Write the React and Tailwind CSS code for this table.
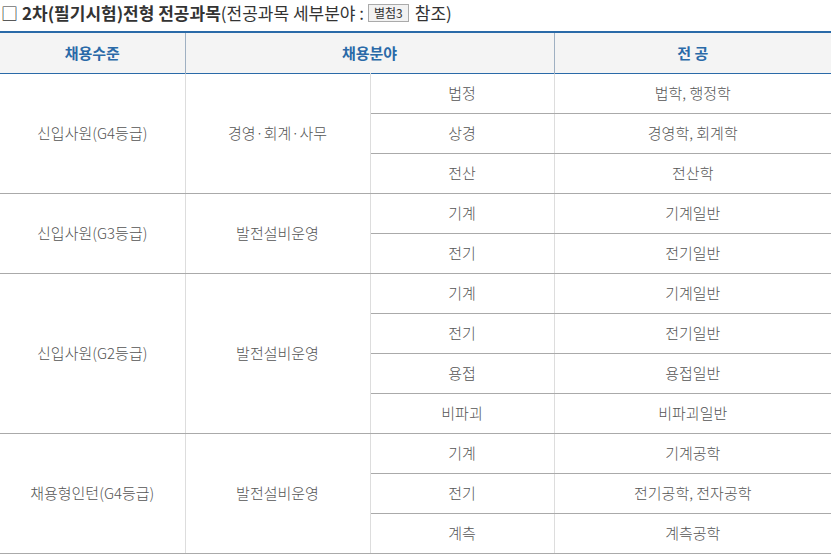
import React from 'react';

const GROUPS = [
  {
    level: '신입사원(G4등급)',
    field: '경영·회계·사무',
    rows: [
      ['법정', '법학, 행정학'],
      ['상경', '경영학, 회계학'],
      ['전산', '전산학'],
    ],
  },
  {
    level: '신입사원(G3등급)',
    field: '발전설비운영',
    rows: [
      ['기계', '기계일반'],
      ['전기', '전기일반'],
    ],
  },
  {
    level: '신입사원(G2등급)',
    field: '발전설비운영',
    rows: [
      ['기계', '기계일반'],
      ['전기', '전기일반'],
      ['용접', '용접일반'],
      ['비파괴', '비파괴일반'],
    ],
  },
  {
    level: '채용형인턴(G4등급)',
    field: '발전설비운영',
    rows: [
      ['기계', '기계공학'],
      ['전기', '전기공학, 전자공학'],
      ['계측', '계측공학'],
    ],
  },
];

export default function App() {
  return (
    <div className="bg-white w-[832px] h-[554px] overflow-hidden text-[#555]" style={{ fontFamily: '"Noto Sans CJK KR", "Noto Sans", sans-serif' }}>
      <div className="flex items-center h-[26px] pl-[1px] text-[17px] text-[#333]">
        <span className="font-normal mr-[4px]">□</span>
        <span className="font-semibold">2차(필기시험)전형 전공과목</span>
        <span>(전공과목 세부분야 :</span>
        <span className="ml-[4px] mr-[6px] px-[5px] h-[18px] leading-[16px] text-[12px] border border-[#aaa] bg-[#f2f2f2] text-[#333]">별첨3</span>
        <span>참조)</span>
      </div>
      <table className="mt-[5px] w-[831px] border-collapse table-fixed text-[15px] text-center font-light">
        <colgroup>
          <col className="w-[185px]" />
          <col className="w-[185px]" />
          <col className="w-[184px]" />
          <col />
        </colgroup>
        <thead>
          <tr className="bg-[#f4f4f4] border-t-2 border-b border-[#2a6aa8]">
            <th className="h-[41px] font-bold text-[#2a6aa8] border-r border-[#9fb0c2]">채용수준</th>
            <th colSpan={2} className="font-bold text-[#2a6aa8] border-r border-[#9fb0c2]">채용분야</th>
            <th className="font-bold text-[#2a6aa8]">전 공</th>
          </tr>
        </thead>
        <tbody>
          {GROUPS.map((g) =>
            g.rows.map((r, i) => (
              <tr key={g.level + i} className={i === 0 ? 'border-t border-[#aaa]' : ''}>
                {i === 0 && (
                  <>
                    <td rowSpan={g.rows.length} className="border-r border-b border-[#ddd] border-b-[#aaa]">{g.level}</td>
                    <td rowSpan={g.rows.length} className="border-r border-b border-[#ddd] border-b-[#aaa]">{g.field}</td>
                  </>
                )}
                <td className="h-[40px] border-r border-[#ddd] border-b border-b-[#aaa]">{r[0]}</td>
                <td className="border-b border-[#aaa]">{r[1]}</td>
              </tr>
            ))
          )}
        </tbody>
      </table>
    </div>
  );
}
